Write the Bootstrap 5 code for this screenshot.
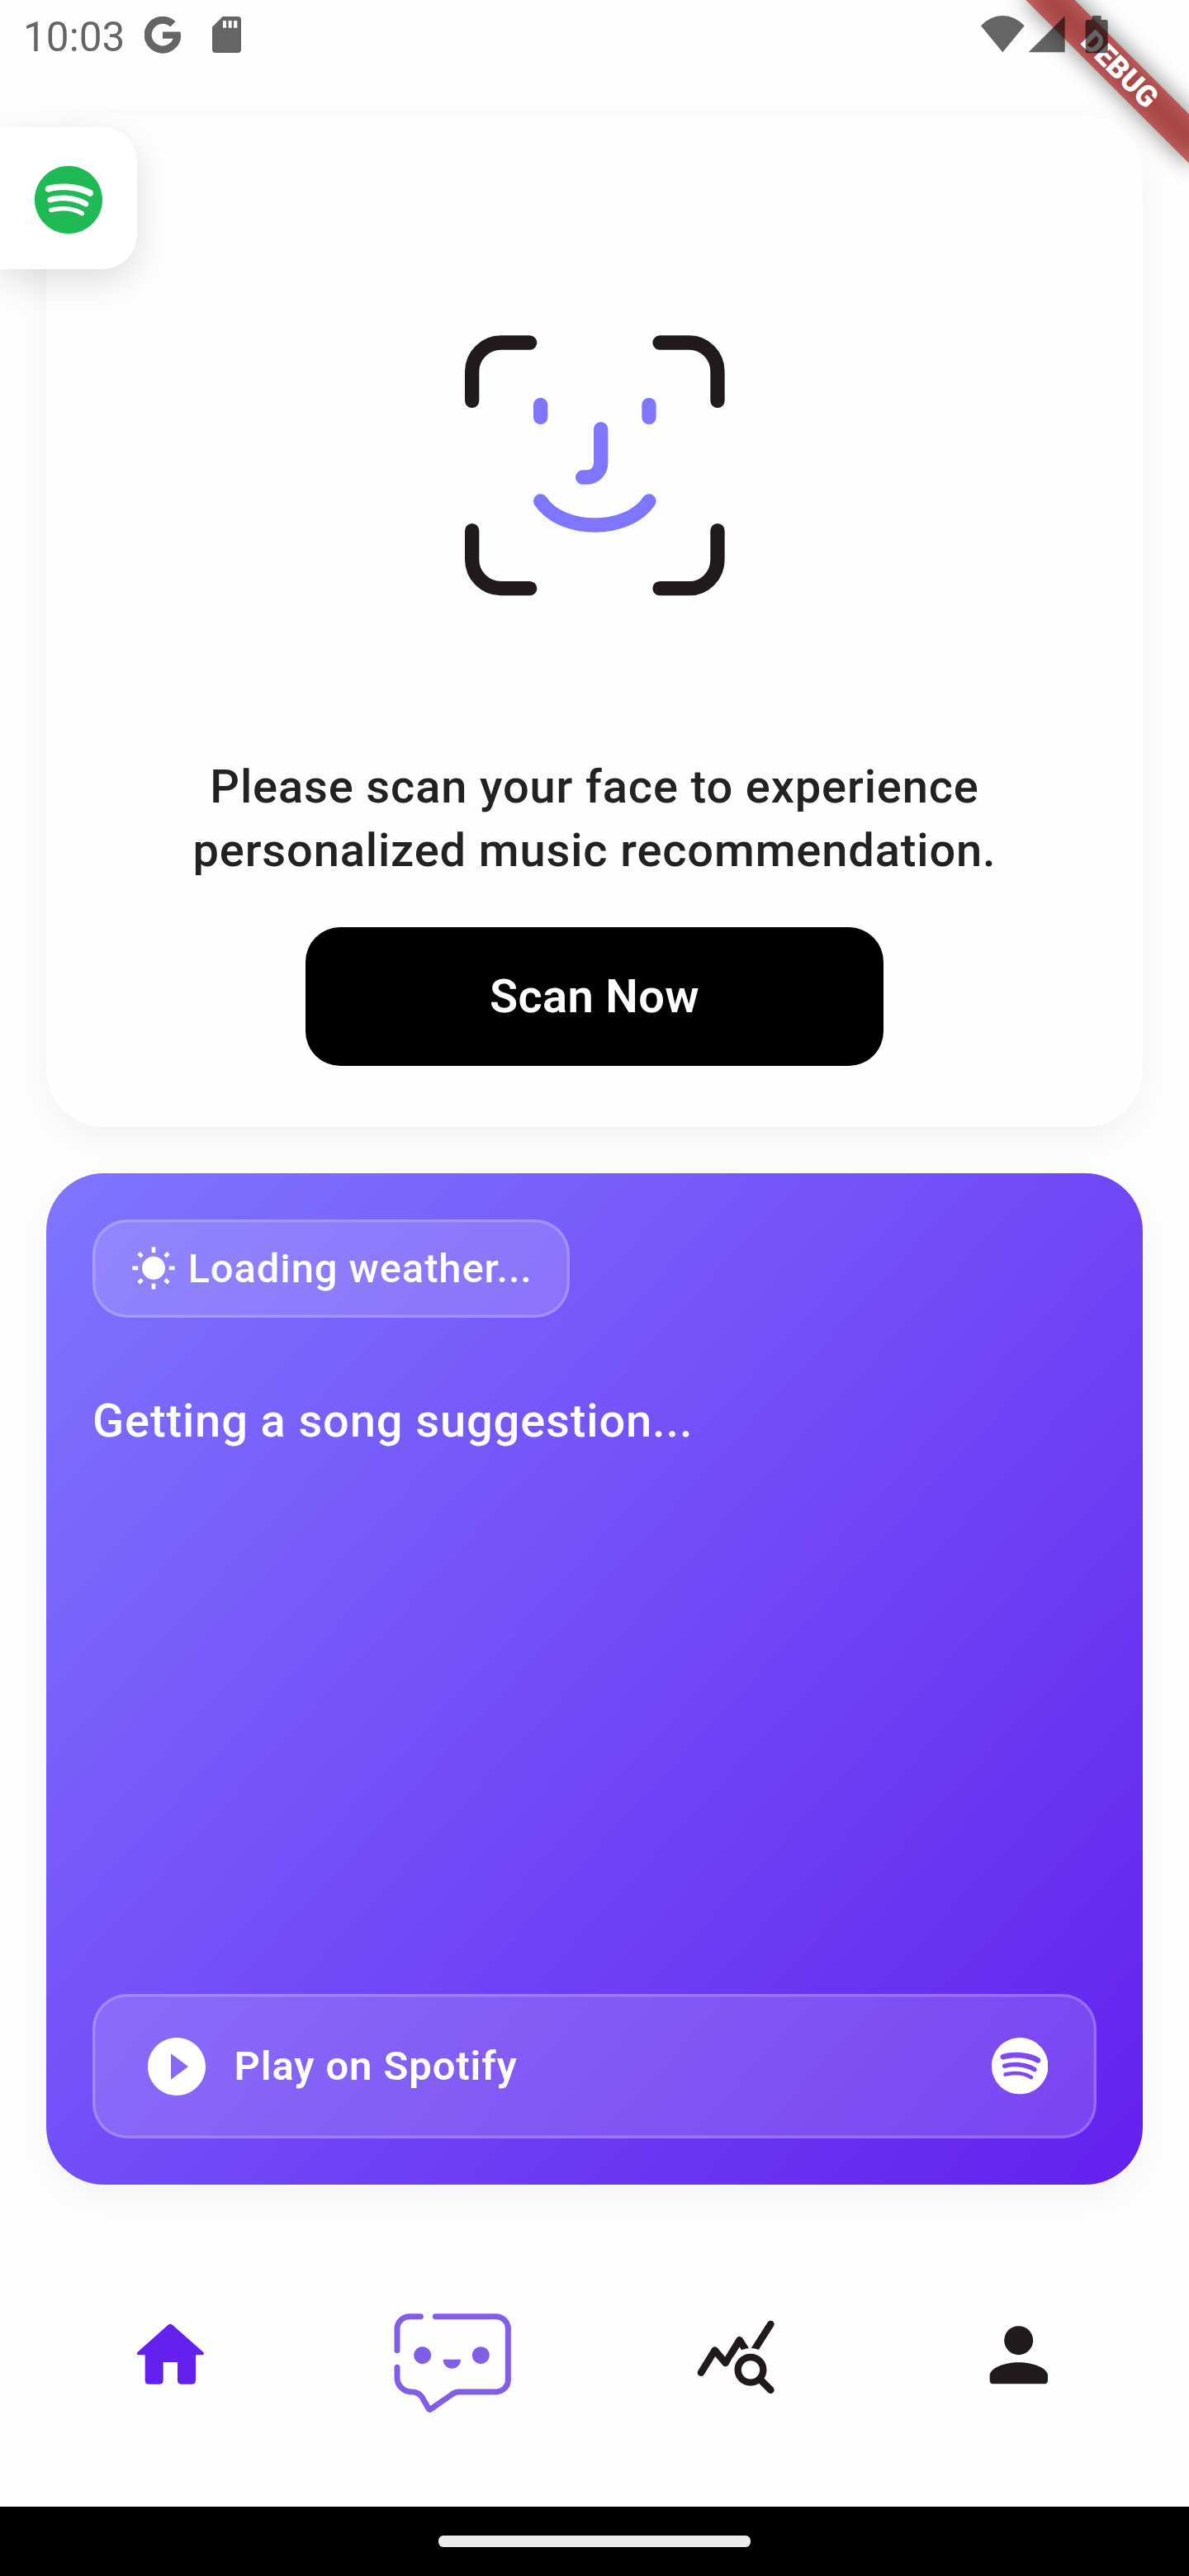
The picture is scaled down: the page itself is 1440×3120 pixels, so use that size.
<!DOCTYPE html>
<html lang="en">
<head>
<meta charset="utf-8">
<meta name="viewport" content="width=device-width, initial-scale=1">
<title>Music recommendations</title>
<link rel="stylesheet" href="https://cdn.jsdelivr.net/npm/bootstrap@5.3.0/dist/css/bootstrap.min.css">
<style>
body{font-family:Roboto,"Liberation Sans",sans-serif;background:#fefefe}
svg{display:block;flex:none}
.screen{width:1440px;height:3120px;overflow:hidden}
.status-bar{height:140px;padding:19px 98px 0 28px;z-index:4}
.status-left,.status-right{opacity:.6;color:#000}
.status-left svg{margin-top:1px}
.sd-icon{margin-left:38px}
.clock{font-size:49.5px;line-height:50px;width:147px;padding-top:1px}
.panel{margin:0 56px;height:1225px;border-radius:70px;box-shadow:0 14px 44px rgba(0,0,0,.05)}
.scan{background:#fefefe;padding-top:265px}
.scan-text{font-size:56px;font-weight:500;line-height:77px;letter-spacing:.875px;color:#222;margin-top:192px}
.scan-btn,.scan-btn:hover{width:700px;height:168px;border:0;border-radius:42px;background:#000;color:#fff;font-size:56px;font-weight:600;letter-spacing:.35px;margin-top:54px}
.song{margin-top:56px;padding:56px;background:linear-gradient(132.7deg,#8075ff,#6320ee)}
.glass{background:rgba(255,255,255,.15);box-shadow:inset 0 0 0 3.5px rgba(255,255,255,.2);border-radius:42px;color:#fff;font-size:49px;letter-spacing:.875px}
.weather{height:119px;width:578px;font-weight:500;padding-left:45.5px;gap:14px}
.suggest{color:#fff;font-size:56px;font-weight:500;line-height:66px;margin-top:92px;letter-spacing:.875px}
.play{height:175px;padding:0 59px 0 59.5px;font-weight:600;gap:28px}
.side-tab{left:0;top:154px;width:165.5px;height:171.5px;border-radius:0 42px 42px 0;background:#fff;box-shadow:0 14px 44px rgba(0,0,0,.13);padding:46.5px 0 0 42px;z-index:2}
.tab-bar{height:390px;padding:154px 36px 0}
.sys-bar{height:84px;background:#000}
.handle{width:378px;height:14px;border-radius:6px;background:#ebebeb}
.ribbon{right:0;top:0;width:300px;height:300px;overflow:hidden;z-index:3}
.ribbon-shade,.ribbon-band{left:75.9px;top:63.1px;width:280px;height:42px;transform:rotate(45deg)}
.ribbon-shade{background:rgba(0,0,0,.5);filter:blur(14px)}
.ribbon-band{background:rgba(183,28,28,.627);color:#fff;font-size:35.7px;line-height:42px;font-weight:900}
</style>
</head>
<body>
<svg width="0" height="0" class="position-absolute">
  <symbol id="spotify" viewBox="0 8 496 496"><path d="M248 8C111.1 8 0 119.1 0 256s111.1 248 248 248 248-111.1 248-248S384.9 8 248 8zm100.7 364.9c-4.2 0-6.8-1.3-10.7-3.6-62.4-37.6-135-39.2-206.7-24.5-3.9 1-9 2.6-11.9 2.6-9.7 0-15.8-7.7-15.8-15.8 0-10.3 6.1-15.2 13.6-16.8 81.9-18.1 165.6-16.5 237 26.2 6.1 3.9 9.7 7.4 9.7 16.5s-7.1 15.4-15.2 15.4zm26.9-65.6c-5.2 0-8.7-2.3-12.3-4.2-62.5-37-155.7-51.9-238.6-29.4-4.8 1.3-7.4 2.6-11.9 2.6-10.7 0-19.4-8.7-19.4-19.4s5.2-17.8 15.5-20.7c27.8-7.8 56.2-13.6 97.8-13.6 64.9 0 127.6 16.1 177 45.5 8.1 4.8 11.3 11 11.3 19.7-.1 10.8-8.5 19.5-19.4 19.5zm31-76.2c-5.2 0-8.4-1.3-12.9-3.9-71.2-42.5-198.5-52.7-280.9-29.7-3.6 1-8.1 2.6-12.9 2.6-13.2 0-23.3-10.3-23.3-23.6 0-13.6 8.4-21.3 17.4-23.9 35.2-10.3 74.6-15.2 117.5-15.2 73 0 149.5 15.2 205.4 47.8 7.8 4.5 12.9 10.7 12.9 22.6 0 13.6-11 23.3-23.2 23.3z"/></symbol>
</svg>
<div class="screen d-flex flex-column position-relative">

  <header class="status-bar d-flex justify-content-between align-items-start position-relative flex-shrink-0">
    <div class="status-left d-flex align-items-start">
      <div class="clock">10:03</div>
      <svg width="44" height="45" viewBox="525 60 132 134"><path d="M628 87.5A53.5 53.5 0 1 0 644.5 127" fill="none" stroke="#000" stroke-width="27"/><path d="M591 115h65q1 8 0 25h-65z"/></svg>
      <svg class="sd-icon" width="35" height="44" viewBox="771 60 105 132"><path fill-rule="evenodd" d="M809 60H864Q876 60 876 72V180Q876 192 864 192H783Q771 192 771 180V98ZM810 75v26h12V75zM830 75v26h12V75zM849 75v26h13V75z"/></svg>
    </div>
    <div class="status-right d-flex align-items-start">
      <svg width="154" height="46" viewBox="145 57 462 138"><path d="M145 94Q179 57 224 57T303 94L224 190ZM318 190L450 58V190ZM549 57h33v15h18q6 0 6 6v108q0 7-7 7h-67q-7 0-7-7V78q0-6 6-6h18z"/></svg>
    </div>
  </header>

  <div class="ribbon position-absolute">
    <div class="ribbon-shade position-absolute"></div>
    <div class="ribbon-band position-absolute text-center">DEBUG</div>
  </div>

  <div class="side-tab position-absolute"><svg width="82" height="82" fill="#1fb955"><use href="#spotify"/></svg></div>

  <section class="panel scan d-flex flex-column align-items-center flex-shrink-0">
    <svg width="317" height="317.7" viewBox="95 75 951 953" fill="none" stroke-width="52" stroke-linecap="round">
      <path stroke="#211a1d" d="M334 105H229A105 105 0 0 0 124 210V316M806 105H914A102 105 0 0 1 1016 210V316M124 788V893A105 105 0 0 0 229 998H334M806 998H914A102 105 0 0 0 1016 893V788"/>
      <path stroke="#8075ff" d="M373 331V376M767 331V376M592 419V544A50 50 0 0 1 542 594H526M373 681C450 797 690 797 767 681"/>
    </svg>
    <p class="scan-text text-center mb-0">Please scan your face to experience<br>personalized music recommendation.</p>
    <button type="button" class="btn scan-btn p-0">Scan Now</button>
  </section>

  <section class="panel song d-flex flex-column align-items-start flex-shrink-0">
    <div class="glass weather d-flex align-items-center">
      <svg width="56" height="56" viewBox="0 0 24 24" fill="#fff"><path d="M6.76 4.84l-1.8-1.79-1.41 1.41 1.79 1.79 1.42-1.41zM4 10.5H1v2h3v-2zm9-9.95h-2V3.5h2V.55zm7.45 3.91l-1.41-1.41-1.79 1.79 1.41 1.41 1.79-1.79zm-3.21 13.7l1.79 1.8 1.41-1.41-1.8-1.79-1.4 1.4zM20 10.5v2h3v-2h-3zm-8-5c-3.31 0-6 2.69-6 6s2.69 6 6 6 6-2.69 6-6-2.69-6-6-6zm-1 16.95h2V19.5h-2v2.95zm-7.45-3.91l1.41 1.41 1.79-1.8-1.41-1.41-1.79 1.8z"/></svg>
      <span>Loading weather...</span>
    </div>
    <p class="suggest mb-0">Getting a song suggestion...</p>
    <div class="glass play d-flex align-items-center w-100 mt-auto">
      <svg width="84" height="84" viewBox="0 0 24 24" fill="#fff"><path d="M12 2C6.48 2 2 6.48 2 12s4.48 10 10 10 10-4.48 10-10S17.52 2 12 2zm-2 14.5v-9l6 4.5-6 4.5z"/></svg>
      <span class="me-auto">Play on Spotify</span>
      <svg width="68.5" height="68.5" fill="#fff"><use href="#spotify"/></svg>
    </div>
  </section>

  <nav class="tab-bar d-flex flex-shrink-0">
    <a class="flex-fill d-flex justify-content-center" href="#" aria-label="Home">
      <svg width="150" height="123.33" viewBox="6 120 450 370" fill="#6320ee"><path d="M228.500 164c-3 0-5 1-7 3L110 266c-5 5-2 11 4 11h23v92q0 14 13 14h40q13 0 13-14v-66h52v66q0 14 13 14h40q13 0 13-14v-92h23c6 0 9-6 4-11L236 167q-3-3-7.500-3z"/></svg>
    </a>
    <a class="flex-fill d-flex justify-content-center" href="#" aria-label="Chat">
      <svg width="150" height="123.33" viewBox="1032 120 450 370" fill="#825de6">
        <path fill="none" stroke="#825de6" stroke-width="21" stroke-linecap="round" stroke-linejoin="round" d="M1138 137H1099A46 44 0 0 0 1053 181V260M1192 137H1411A45 44 0 0 1 1456 181V368A45 43 0 0 1 1411 411H1278Q1264 411 1252 420L1176 473Q1171 477 1167 472L1143 430Q1130 411 1106 411A53 51 0 0 1 1053 360V322"/>
        <circle cx="1145" cy="278" r="31.500"/><circle cx="1357" cy="278" r="31.500"/><path d="M1220 293H1284A32 33 0 0 1 1220 293z"/>
      </svg>
    </a>
    <a class="flex-fill d-flex justify-content-center" href="#" aria-label="Insights">
      <svg width="150" height="123.33" viewBox="48 120 450 370" fill="none" stroke="#211a1d" stroke-width="26" stroke-linecap="round" stroke-linejoin="round">
        <path d="M147 341L197 260L236 306L287 223L318 272M400 165L332 272"/>
        <circle cx="327" cy="331" r="79" fill="#fefefe" stroke="none"/>
        <circle cx="327" cy="331" r="46" stroke-width="25"/><path d="M366 370L400 404"/>
      </svg>
    </a>
    <a class="flex-fill d-flex justify-content-center" href="#" aria-label="Profile">
      <svg width="150" height="123.33" viewBox="1074 120 450 370" fill="#211a1d"><circle cx="1301" cy="224" r="52.500"/><path d="M1196 352C1196 325 1248 304 1301 304S1407 325 1407 352V368Q1407 382 1393 382H1210Q1196 382 1196 368Z"/></svg>
    </a>
  </nav>

  <footer class="sys-bar d-flex justify-content-center align-items-center flex-shrink-0"><div class="handle"></div></footer>
</div>
<script src="https://cdn.jsdelivr.net/npm/bootstrap@5.3.0/dist/js/bootstrap.bundle.min.js"></script>
</body>
</html>
